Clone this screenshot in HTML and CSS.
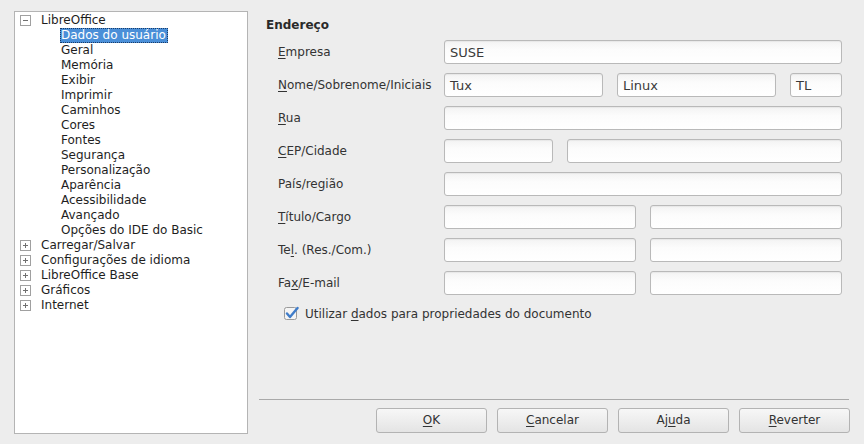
FILE: index.html
```html
<!DOCTYPE html>
<html>
<head>
<meta charset="utf-8">
<link rel="stylesheet" href="styles.css">
</head>
<body>
<div class="dialog">
  <div class="tree">
    <div class="node top"><svg class="exp" width="11" height="11" viewBox="0 0 11 11"><rect x="0.5" y="0.5" width="10" height="10" fill="#fff" stroke="#a0a0a0"/><path d="M3 5.5h5" stroke="#707070"/></svg><span>LibreOffice</span></div>
    <div class="node child"><span class="sel">Dados do usuário</span></div>
    <div class="node child"><span>Geral</span></div>
    <div class="node child"><span>Memória</span></div>
    <div class="node child"><span>Exibir</span></div>
    <div class="node child"><span>Imprimir</span></div>
    <div class="node child"><span>Caminhos</span></div>
    <div class="node child"><span>Cores</span></div>
    <div class="node child"><span>Fontes</span></div>
    <div class="node child"><span>Segurança</span></div>
    <div class="node child"><span>Personalização</span></div>
    <div class="node child"><span>Aparência</span></div>
    <div class="node child"><span>Acessibilidade</span></div>
    <div class="node child"><span>Avançado</span></div>
    <div class="node child"><span>Opções do IDE do Basic</span></div>
    <div class="node top"><svg class="exp" width="11" height="11" viewBox="0 0 11 11"><rect x="0.5" y="0.5" width="10" height="10" fill="#fff" stroke="#a0a0a0"/><path d="M3 5.5h5M5.5 3v5" stroke="#707070"/></svg><span>Carregar/Salvar</span></div>
    <div class="node top"><svg class="exp" width="11" height="11" viewBox="0 0 11 11"><rect x="0.5" y="0.5" width="10" height="10" fill="#fff" stroke="#a0a0a0"/><path d="M3 5.5h5M5.5 3v5" stroke="#707070"/></svg><span>Configurações de idioma</span></div>
    <div class="node top"><svg class="exp" width="11" height="11" viewBox="0 0 11 11"><rect x="0.5" y="0.5" width="10" height="10" fill="#fff" stroke="#a0a0a0"/><path d="M3 5.5h5M5.5 3v5" stroke="#707070"/></svg><span>LibreOffice Base</span></div>
    <div class="node top"><svg class="exp" width="11" height="11" viewBox="0 0 11 11"><rect x="0.5" y="0.5" width="10" height="10" fill="#fff" stroke="#a0a0a0"/><path d="M3 5.5h5M5.5 3v5" stroke="#707070"/></svg><span>Gráficos</span></div>
    <div class="node top"><svg class="exp" width="11" height="11" viewBox="0 0 11 11"><rect x="0.5" y="0.5" width="10" height="10" fill="#fff" stroke="#a0a0a0"/><path d="M3 5.5h5M5.5 3v5" stroke="#707070"/></svg><span>Internet</span></div>
  </div>
  <div class="main">
    <div class="page">
      <div class="heading">Endereço</div>
      <div class="form">
        <div class="row"><div class="label"><u>E</u>mpresa</div><div class="fields"><div class="field grow">SUSE</div></div></div>
        <div class="row"><div class="label"><u>N</u>ome/Sobrenome/Iniciais</div><div class="fields"><div class="field w159">Tux</div><div class="field w159">Linux</div><div class="field w52">TL</div></div></div>
        <div class="row"><div class="label"><u>R</u>ua</div><div class="fields"><div class="field grow"></div></div></div>
        <div class="row"><div class="label"><u>C</u>EP/Cidade</div><div class="fields"><div class="field w109"></div><div class="field grow"></div></div></div>
        <div class="row"><div class="label">País/região</div><div class="fields"><div class="field grow"></div></div></div>
        <div class="row"><div class="label"><u>T</u>ítulo/Cargo</div><div class="fields"><div class="field grow"></div><div class="field grow"></div></div></div>
        <div class="row"><div class="label">Te<u>l</u>. (Res./Com.)</div><div class="fields"><div class="field grow"></div><div class="field grow"></div></div></div>
        <div class="row"><div class="label">Fa<u>x</u>/E-mail</div><div class="fields"><div class="field grow"></div><div class="field grow"></div></div></div>
      </div>
      <div class="check">
        <svg class="cb" width="15" height="15" viewBox="0 0 15 15"><rect x="0.5" y="1.5" width="12" height="12" rx="2" fill="#f4f4f4" stroke="#9a9a9a"/><path d="M3 7.5l3 3.5L13.5 2" fill="none" stroke="#3f7cc9" stroke-width="2.4" stroke-linecap="round" stroke-linejoin="round"/></svg>
        <span>Utilizar <u>d</u>ados para propriedades do documento</span>
      </div>
    </div>
    <div class="sep"></div>
    <div class="buttons">
      <div class="btn"><u>O</u>K</div>
      <div class="btn"><u>C</u>ancelar</div>
      <div class="btn">Aj<u>u</u>da</div>
      <div class="btn"><u>R</u>everter</div>
    </div>
  </div>
</div>
</body>
</html>
```

FILE: styles.css
```css
html, body {
  margin: 0;
  padding: 0;
  background: #ededed;
}
body {
  font-family: "DejaVu Sans", Verdana, sans-serif;
  font-size: 12px;
  color: #2e2e2e;
  width: 864px;
  height: 444px;
  overflow: hidden;
}
u {
  text-decoration: underline;
  text-underline-offset: 2px;
}
.dialog {
  display: flex;
  align-items: flex-start;
}
.tree {
  margin: 11px 0 0 14px;
  width: 232px;
  height: 420px;
  background: #fff;
  border: 1px solid #b4b4b4;
  padding-top: 1px;
  box-sizing: content-box;
}
.node {
  height: 15px;
  line-height: 15px;
  display: flex;
  align-items: center;
  white-space: nowrap;
  color: #1e1e1e;
}
.node.top {
  padding-left: 5px;
}
.exp {
  flex: none;
  margin-right: 10px;
  margin-top: -1px;
}
.node.child {
  padding-left: 45px;
}
.node.child span {
  padding: 0 1px 0 0;
  border: 1px solid transparent;
  line-height: 13px;
}
.node.child span.sel {
  background: #4a8fd8;
  color: #fff;
  border: 1px dotted #1a3b66;
}
.main {
  margin-left: 11px;
  width: 591px;
  display: flex;
  flex-direction: column;
}
.page {
  height: 399px;
  padding: 18px 8px 0 7px;
  box-sizing: border-box;
}
.heading {
  font-weight: bold;
  line-height: 15px;
  height: 15px;
  color: #2a2a2a;
}
.form {
  margin-top: 7px;
  padding-left: 12px;
  display: flex;
  flex-direction: column;
  gap: 9px;
}
.row {
  display: flex;
  height: 24px;
  align-items: center;
}
.label {
  width: 166px;
  flex: none;
  color: #333;
  white-space: nowrap;
}
.fields {
  flex: 1;
  display: flex;
  gap: 14px;
  height: 24px;
}
.field {
  height: 24px;
  box-sizing: border-box;
  border: 1px solid #b9b9b9;
  border-radius: 3px;
  background: linear-gradient(#f3f3f3, #fcfcfc 40%, #ffffff);
  box-shadow: inset 0 1px 1px rgba(0,0,0,0.05);
  padding-left: 5px;
  line-height: 23px;
  font-size: 13px;
  color: #3a3a3a;
}
.grow { flex: 1; }
.w159 { width: 159px; flex: none; }
.w52 { width: 52px; flex: none; }
.w109 { width: 109px; flex: none; }
.check {
  margin-top: 11px;
  padding-left: 18px;
  display: flex;
  align-items: center;
  height: 15px;
  color: #333;
}
.cb {
  flex: none;
  margin-right: 6px;
}
.sep {
  width: 590px;
  height: 1px;
  background: #a9a9a9;
}
.buttons {
  margin-top: 8px;
  display: flex;
  justify-content: flex-end;
  gap: 10px;
}
.btn {
  width: 111px;
  height: 25px;
  box-sizing: border-box;
  border: 1px solid #b3b3b3;
  border-radius: 3px;
  background: linear-gradient(#f7f7f7, #e4e4e4);
  text-align: center;
  line-height: 23px;
  color: #333;
}
```
